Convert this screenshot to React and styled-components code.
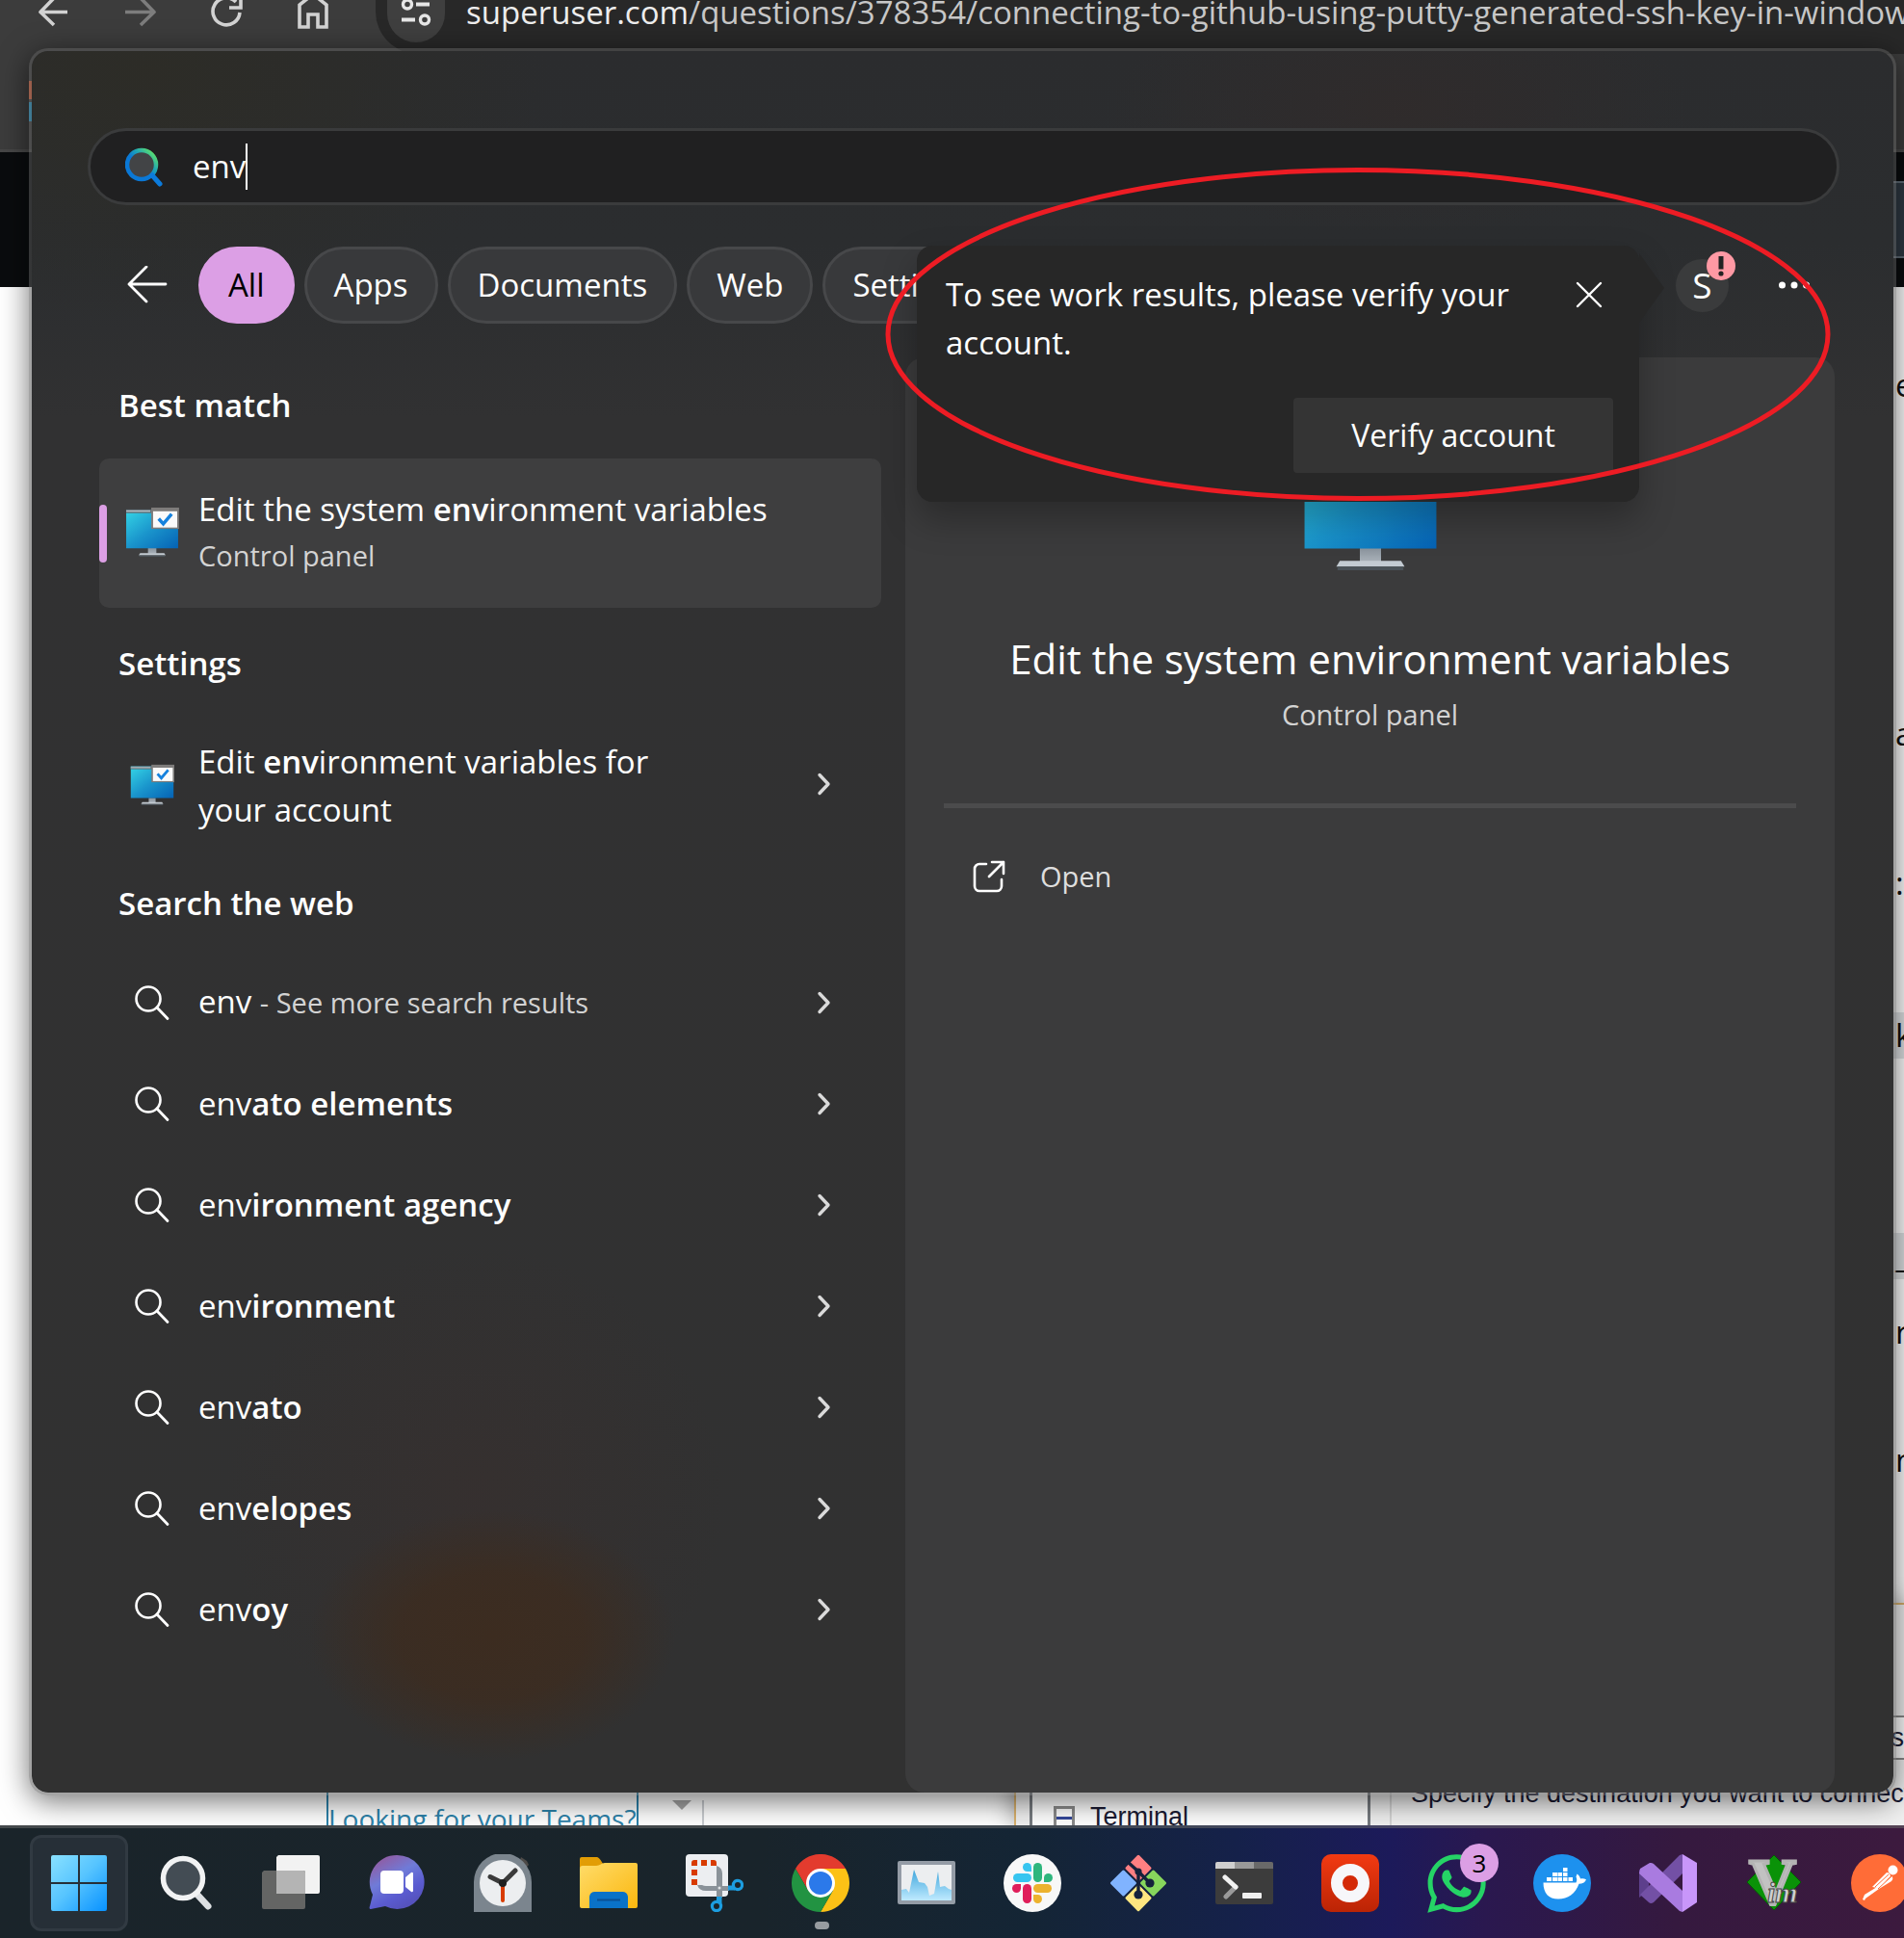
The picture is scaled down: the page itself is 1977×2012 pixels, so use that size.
import React from "react";
import styled, { createGlobalStyle } from "styled-components";
import { FaWhatsapp } from "react-icons/fa";

const GlobalStyle = createGlobalStyle`
  *, *::before, *::after { box-sizing: border-box; }
  body {
    margin: 0;
    background: #fff;
    font-family: "Open Sans", "Noto Sans", sans-serif;
    color: #fff;
  }
  button, input { font: inherit; color: inherit; border: 0; background: none; padding: 0; margin: 0; outline: 0; }
  h1, h2, p { margin: 0; padding: 0; font-weight: 400; }
  svg { display: block; flex: none; }
`;

const Screen = styled.div`
  display: flex;
  flex-direction: column;
  min-height: 100vh;
  overflow: hidden;
`;

const Desktop = styled.main`
  position: relative;
  flex: 1;
  display: flex;
  overflow: hidden;
`;

/* ---------- browser window behind the search panel ---------- */

const Browser = styled.section`
  position: absolute;
  inset: 0;
  display: flex;
  flex-direction: column;
  background: #fff;
  overflow: hidden;
`;

const BrowserToolbar = styled.div`
  flex: none;
  height: 158px;
  display: flex;
  align-items: flex-start;
  background: #3c3c3c;
  border-bottom: 3px solid #474747;
`;

const NavButtons = styled.div`
  flex: none;
  display: flex;
  width: 390px;
  padding-left: 36px;
  gap: 50px;
`;

const NavButton = styled.button`
  width: 40px;
  height: 34px;
  overflow: hidden;
  color: ${(p) => (p.$dim ? "#7d7d7d" : "#d2d2d2")};
`;

const AddressBar = styled.div`
  flex: 1;
  min-width: 0;
  height: 56px;
  padding: 0 0 12px 12px;
  display: flex;
  align-items: flex-end;
  gap: 20px;
  background: #282828;
  border-radius: 0 0 0 44px;
  overflow: hidden;
`;

const SiteInfo = styled.button`
  flex: none;
  width: 60px;
  height: 44px;
  display: flex;
  justify-content: center;
  background: #3f3f3f;
  border-radius: 0 0 30px 30px;
`;

const Url = styled.span`
  padding-left: 2px;
  font-size: 33px;
  line-height: 46px;
  height: 54px;
  white-space: nowrap;
  color: #c7c7c7;
  b { font-weight: 400; color: #ededed; }
`;

const SiteHeader = styled.div`
  flex: none;
  height: 140px;
  padding: 30px 0;
  display: flex;
  justify-content: flex-end;
  background: #0a0c0e;
`;

const SiteSearch = styled.div`
  width: 60px;
  border: 2px solid #5f6b76;
  border-right: 0;
  background: #2e3842;
`;

const Favicon = styled.div`
  position: absolute;
  left: 30px;
  top: 84px;
  width: 40px;
  height: 42px;
  background: linear-gradient(#e8643a 0 19px, transparent 19px 22px, #1fa0d8 22px);
`;

const EdgeText = styled.span`
  position: absolute;
  left: 1966px;
  top: ${(p) => p.$top}px;
  width: 40px;
  padding-left: 2px;
  font-size: 33px;
  line-height: 48px;
  color: #111;
  background: ${(p) => (p.$marked ? "#e0e3e5" : "transparent")};
`;

const TeamsLink = styled.a`
  position: absolute;
  left: 339px;
  bottom: -25px;
  height: 69px;
  padding-top: 14px;
  border: solid #2d83ab;
  border-width: 0 2px;
  font-size: 28px;
  line-height: 46px;
  white-space: nowrap;
  color: #2d83ab;
  text-decoration: none;
`;

const PageGutter = styled.div`
  position: absolute;
  left: 697px;
  bottom: 0;
  width: 34px;
  height: 26px;
  border-right: 2px solid #c9ccd0;
`;

/* ---------- configuration dialog behind the panel ---------- */

const Dialog = styled.section`
  position: absolute;
  left: 1053px;
  right: 0;
  bottom: 0;
  height: 231px;
  display: flex;
  background: #f0f0f0;
  border: solid #d8b06c;
  border-width: 2px 0 0 2px;
  font-family: "Liberation Sans", Arial, sans-serif;
  font-size: 27px;
  color: #1b1b33;
  box-shadow: 0 0 24px rgba(0, 0, 0, 0.4);
`;

const DialogTree = styled.div`
  flex: none;
  width: 354px;
  margin: 20px 0 0 14px;
  padding-left: 22px;
  display: flex;
  align-items: flex-end;
  gap: 16px;
  border: solid #777b80;
  border-width: 0 3px;
  background: #fff;
  line-height: 32px;
  span { height: 25px; }
`;

const TreeBox = styled.i`
  width: 22px;
  height: 20px;
  border: 3px solid #8b8b8b;
  border-bottom: 0;
  background: linear-gradient(transparent 8px, #34489a 8px 11px, transparent 11px);
`;

const DialogForm = styled.div`
  flex: 1;
  margin-left: 20px;
  padding: 178px 0 0 20px;
  border-left: 2px solid #d4d4d4;
  line-height: 36px;
  white-space: nowrap;
`;

const DialogField = styled.div`
  position: absolute;
  right: 0;
  bottom: 68px;
  width: 200px;
  border: solid #8a8a8a;
  border-width: 2px 0;
  background: #fff;
  text-align: right;
  line-height: 42px;
`;

/* ---------- search panel ---------- */

const Panel = styled.section`
  position: relative;
  flex: 1;
  min-width: 0;
  display: flex;
  flex-direction: column;
  margin: 50px 8px 31px 30px;
  padding-top: 80px;
  border: 3px solid rgba(90, 90, 90, 0.55);
  border-radius: 20px;
  background:
    radial-gradient(ellipse 190px 130px at 478px 1645px, #3c2c20 0%, rgba(60, 44, 32, 0.85) 50%, rgba(60, 44, 32, 0) 100%),
    radial-gradient(ellipse 260px 260px at 460px 1500px, rgba(60, 46, 44, 0.4), transparent),
    radial-gradient(ellipse 420px 260px at 120px 20px, rgba(45, 44, 38, 0.9), transparent),
    radial-gradient(ellipse 300px 130px at 1420px 60px, rgba(48, 43, 43, 0.9), transparent),
    linear-gradient(#2b2c2e 0, #2b2d2f 200px, #313132 380px, #313131 100%);
  background-clip: padding-box;
  box-shadow: 0 6px 30px rgba(0, 0, 0, 0.55);
`;

const SearchBox = styled.label`
  display: flex;
  align-items: center;
  height: 80px;
  margin: 0 56px 0 58px;
  padding-left: 36px;
  border: 3px solid #3a3b3c;
  border-radius: 40px;
  background: #202021;
`;

const SearchInput = styled.input`
  margin-left: 30px;
  field-sizing: content;
  font-size: 33px;
  line-height: 46px;
`;

const Caret = styled.span`
  width: 2px;
  height: 48px;
  background: #fff;
`;

const FilterBar = styled.nav`
  display: flex;
  align-items: center;
  gap: 10px;
  margin: 43px 0 35px;
  padding: 0 87px 0 98px;
`;

const BackButton = styled.button`
  width: 65px;
  height: 80px;
  display: flex;
  align-items: center;
`;

const Chip = styled.button`
  height: 80px;
  padding: 0 28px;
  border: 3px solid ${(p) => (p.$active ? "#dc9fe5" : "#47484a")};
  border-radius: 40px;
  background: ${(p) => (p.$active ? "#dc9fe5" : "#38393b")};
  color: ${(p) => (p.$active ? "#000" : "#fff")};
  font-size: 33px;
  line-height: 46px;
`;

const AccountArea = styled.div`
  position: relative;
  margin-left: auto;
`;

const Avatar = styled.button`
  display: grid;
  place-items: center;
  width: 55px;
  height: 55px;
  border-radius: 50%;
  background: #3a3b3c;
  font-size: 37px;
  line-height: 46px;
`;

const AlertBadge = styled.span`
  position: absolute;
  top: -8px;
  right: -7px;
  display: grid;
  place-items: center;
  width: 30px;
  height: 30px;
  border-radius: 50%;
  background: #ff99a4;
`;

const MoreButton = styled.button`
  display: flex;
  align-items: center;
  justify-content: flex-end;
  width: 74px;
  height: 55px;
`;

const Popup = styled.div`
  position: absolute;
  z-index: 2;
  right: calc(100% + 38px);
  top: -14px;
  width: 750px;
  padding: 20px 27px 30px 30px;
  border-radius: 16px;
  background: #272727;
  box-shadow: 0 18px 36px rgba(0, 0, 0, 0.28);
  &::after {
    content: "";
    position: absolute;
    left: 100%;
    top: 8px;
    border: solid transparent;
    border-width: 36px 0 36px 26px;
    border-left-color: #272727;
  }
`;

const PopupMessage = styled.div`
  display: flex;
  align-items: flex-start;
  justify-content: space-between;
  padding: 6px 8px 0 0;
  p { width: 600px; font-size: 33px; line-height: 50px; }
`;

const CloseButton = styled.button`
  display: grid;
  place-items: center;
  width: 34px;
  height: 50px;
`;

const VerifyButton = styled.button`
  display: block;
  width: 332px;
  height: 78px;
  margin: 32px 0 0 auto;
  border-radius: 4px;
  background: #343434;
  font-size: 32px;
  line-height: 46px;
`;

const Results = styled.div`
  flex: 1;
  display: grid;
  grid-template-columns: minmax(0, 812fr) minmax(0, 965fr);
  gap: 25px;
  padding: 0 61px 0 70px;
`;

const ResultList = styled.div`
  padding: 27px 0 136px;
`;

const GroupTitle = styled.h2`
  margin-top: ${(p) => p.$space || 0}px;
  padding-left: 20px;
  font-size: 33px;
  line-height: 46px;
  font-weight: 600;
`;

const BestMatch = styled.button`
  position: relative;
  display: flex;
  width: 100%;
  margin-top: 32px;
  padding: 28px 0 31px;
  border-radius: 10px;
  background: #3e3e3f;
  text-align: left;
  &::before {
    content: "";
    position: absolute;
    left: 0;
    top: 48px;
    width: 8px;
    height: 60px;
    border-radius: 4px;
    background: #dc9fe5;
  }
`;

const IconSlot = styled.span`
  flex: none;
  display: flex;
  align-items: center;
  justify-content: center;
  width: 56px;
  margin: 0 20px 0 27px;
`;

const ResultText = styled.span`
  flex: 1;
  font-size: 33px;
  line-height: 50px;
  b { font-weight: 600; }
  small { font-size: 29px; color: #d3d3d3; }
`;

const Subtitle = styled.span`
  display: block;
  font-size: 29px;
  line-height: 46px;
  color: #d3d3d3;
`;

const ResultRow = styled.button`
  display: flex;
  align-items: center;
  width: 100%;
  height: ${(p) => (p.$tall ? 154 : 105)}px;
  padding-right: 52px;
  text-align: left;
`;

const SettingText = styled(ResultText)`
  max-width: 500px;
  margin-right: auto;
  padding-top: 3px;
`;

const RowGroup = styled.div`
  margin-top: ${(p) => p.$space}px;
`;

const Preview = styled.aside`
  display: flex;
  flex-direction: column;
  align-items: center;
  padding: 89px 40px 0;
  border-radius: 20px;
  background: #3b3b3c;
`;

const PreviewTitle = styled.h1`
  margin-top: 60px;
  font-size: 42px;
  line-height: 64px;
  text-align: center;
`;

const PreviewKind = styled.p`
  margin-top: 3px;
  font-size: 29px;
  line-height: 46px;
  color: #d3d3d3;
`;

const Divider = styled.hr`
  width: 100%;
  height: 5px;
  margin: 69px 0 48px;
  border: 0;
  background: #4b4b4c;
`;

const OpenAction = styled.button`
  display: flex;
  align-items: center;
  gap: 36px;
  width: 100%;
  padding-left: 30px;
  font-size: 29px;
  line-height: 46px;
  color: #dedede;
`;

const RedRing = styled.svg`
  position: absolute;
  z-index: 3;
  right: 63px;
  top: 118px;
  pointer-events: none;
`;

/* ---------- taskbar ---------- */

const Taskbar = styled.footer`
  flex: none;
  display: flex;
  align-items: center;
  height: 117px;
  padding-left: 27px;
  overflow: hidden;
  border-top: 3px solid rgba(110, 110, 110, 0.5);
  background: linear-gradient(90deg, #1a242a 0, #19242b 40%, #142535 54%, #15214a 65%, #1c1a5a 73%, #2a184f 78%, #35193f 88%, #3c1a3e 100%);
`;

const TaskButton = styled.button`
  position: relative;
  flex: none;
  display: grid;
  place-items: center;
  width: 102px;
  height: 100px;
  margin: 0 4px;
  border-radius: 12px;
  border: 3px solid ${(p) => (p.$active ? "#313a42" : "transparent")};
  background: ${(p) => (p.$active ? "#262f37" : "none")};
`;

const RunningMark = styled.span`
  position: absolute;
  bottom: -1px;
  left: 42px;
  width: 15px;
  height: 8px;
  border-radius: 4px;
  background: #979ca0;
`;

const CountBadge = styled.span`
  position: absolute;
  top: 6px;
  left: 52px;
  display: grid;
  place-items: center;
  width: 40px;
  height: 40px;
  border-radius: 50%;
  background: #dc9fe5;
  color: #000;
  font-size: 26px;
  line-height: 40px;
`;

/* ---------- icons ---------- */

const line = (w) => ({ fill: "none", stroke: "currentColor", strokeWidth: w, strokeLinecap: "round", strokeLinejoin: "round" });

const Chevron = () => (
  <svg width="15" height="24" viewBox="0 0 15 24" color="#dadada"><path d="M3 2.500 12 12 3 21.500" {...line(3.4)} /></svg>
);

const Lens = () => (
  <svg width="38" height="38" viewBox="0 0 38 38"><circle cx="15" cy="15" r="12.500" {...line(2.6)} /><path d="m24 24 11 11.500" {...line(2.8)} /></svg>
);

const Monitor = ({ width, id, badge = true }) => (
  <svg width={width} height={Math.round((width * 54) / 58)} viewBox="0 0 58 54">
    <defs>
      <linearGradient id={id} x1="0" y1="0" x2="1" y2="1">
        <stop offset="0" stopColor="#35d6e6" /><stop offset="0.5" stopColor="#1a95cc" /><stop offset="1" stopColor="#0562b5" />
      </linearGradient>
      <linearGradient id={id + "s"} x1="0" y1="0" x2="0" y2="1">
        <stop offset="0" stopColor="#8a939c" /><stop offset="1" stopColor="#a9b1b9" />
      </linearGradient>
    </defs>
    <path d="M24.500 44.500h9v6h-9z" fill={"url(#" + id + "s)"} />
    <path d="M16 50h26l1.500 2.500h-29z" fill="#c3cbd2" />
    <path d="M15 52.500h28V54H15z" fill="#4a5258" />
    <path d="M1 3h56v41.800H1z" fill={"url(#" + id + ")"} />
    {badge && (
      <g>
        <path d="M1 3h28v4H1z" fill="#5f7078" />
        <path d="M1 4h26v1.500H1z" fill="#b7c2c8" />
        <path d="M28 1h30v23H28z" fill="#7e7c7b" />
        <path d="M30 5h26v17.500H30z" fill="#fafafa" />
        <path d="m36 13 5 5.500L50 8" fill="none" stroke="#1682dd" strokeWidth="3.600" />
      </g>
    )}
  </svg>
);

const SearchLogo = () => (
  <svg width="40" height="42" viewBox="0 0 40 42">
    <defs>
      <linearGradient id="lensRing" x1="1" y1="0" x2="0.3" y2="0.7">
        <stop offset="0.1" stopColor="#5fe36b" /><stop offset="0.5" stopColor="#1fa6b5" /><stop offset="0.8" stopColor="#0a78d6" />
      </linearGradient>
    </defs>
    <circle cx="17" cy="19" r="15" fill="#424446" stroke="url(#lensRing)" strokeWidth="4.500" />
    <path d="m28 30 8 9" stroke="#0c7bdc" strokeWidth="5" strokeLinecap="round" />
  </svg>
);

const Box = ({ children }) => <svg width="60" height="60" viewBox="0 0 60 60">{children}</svg>;

const StartIcon = () => (
  <Box>
    <defs><linearGradient id="win" x1="0" y1="0" x2="58" y2="58" gradientUnits="userSpaceOnUse"><stop offset="0" stopColor="#8be2ff" /><stop offset="0.5" stopColor="#56c4ff" /><stop offset="1" stopColor="#0a93ff" /></linearGradient></defs>
    <path fill="url(#win)" d="M3 1h26v28H1V3a2 2 0 0 1 2-2zM31 1h26a2 2 0 0 1 2 2v26H31zM1 31h28v28H3a2 2 0 0 1-2-2zM31 31h28v26a2 2 0 0 1-2 2H31z" />
  </Box>
);

const TaskSearchIcon = () => (
  <Box>
    <path d="m42 41 12 13" stroke="#dde0e3" strokeWidth="7" strokeLinecap="round" />
    <circle cx="28" cy="25" r="20.500" fill="#434c54" stroke="#f1f2f3" strokeWidth="5.500" />
  </Box>
);

const TaskViewIcon = () => (
  <Box>
    <path d="M17 1h41a2 2 0 0 1 2 2v36a2 2 0 0 1-2 2H15V3z" fill="#f2f2f2" />
    <path d="M2 17h41a2 2 0 0 1 2 2v36a2 2 0 0 1-2 2H2a2 2 0 0 1-2-2V19z" fill="#646564" />
    <path d="M15 17h28a2 2 0 0 1 2 2v22H15z" fill="#b4b4b4" />
  </Box>
);

const ChatIcon = () => (
  <Box>
    <defs><linearGradient id="chat" x1="0.2" y1="0.1" x2="0.7" y2="1"><stop offset="0" stopColor="#8d5fa8" /><stop offset="0.35" stopColor="#6f7bd8" /><stop offset="0.7" stopColor="#5a5bd0" /><stop offset="1" stopColor="#5450b8" /></linearGradient></defs>
    <path d="M30 1a28 28 0 1 1-12 53L3 57c-1 0-2-1-1-3l3-12A28 28 0 0 1 30 1z" fill="url(#chat)" />
    <rect x="13" y="17" width="24" height="24" rx="4" fill="#fff" />
    <path d="m39 24 6-5a1.500 1.500 0 0 1 2 1v18a1.500 1.500 0 0 1-2 1l-6-5z" fill="#fff" />
  </Box>
);

const ClockIcon = () => (
  <Box>
    <path d="m49 3 6 4 2 4-4 4-6-6z" fill="#4d4a48" />
    <path d="M0 60V29a30 30 0 0 1 60 0v31z" fill="#7b858e" />
    <circle cx="30" cy="30" r="24" fill="#eceef0" />
    <path d="M30 30v18" stroke="#d83b01" strokeWidth="4" strokeLinecap="round" />
    <path d="M17 23.500 30 30 43 17" fill="none" stroke="#3b3b3b" strokeWidth="5" strokeLinecap="round" />
    <circle cx="30" cy="30" r="4" fill="#1f1f1f" />
  </Box>
);

const FolderIcon = () => (
  <Box>
    <defs><linearGradient id="folder" x1="0" y1="0" x2="1" y2="1"><stop offset="0" stopColor="#ffdc6a" /><stop offset="1" stopColor="#fbb70e" /></linearGradient></defs>
    <path d="M0 14V5a2 2 0 0 1 2-2h16c3 0 6 9 9 9z" fill="#e29d05" />
    <path d="M0 15c0-2 1-3 3-3h14c4 0 6-3 9-3h32a2 2 0 0 1 2 2v43a2 2 0 0 1-2 2H2a2 2 0 0 1-2-2z" fill="url(#folder)" />
    <path d="M10 56V44a6 6 0 0 1 6-5h28a6 6 0 0 1 6 5v12z" fill="#0a72c8" />
    <path d="M18 47.500h24" stroke="#0b4f93" strokeWidth="2" />
  </Box>
);

const SnipIcon = () => (
  <Box>
    <rect x="0" y="0" width="44" height="44" rx="4" fill="#eceef1" />
    <path fill="#d83b01" d="M6 9q0-3 3-3h3v6H6zM16 6h6v6h-6zM26 6h3q3 0 3 3v3h-6zM6 16h6v6H6zM6 26h6v6H6z" />
    <path d="M12 32h5q2 1 4 1h24v5H21q-7 0-9-6zM32 12q6 2 6 8v25h-6z" fill="#8a9299" />
    <path d="M44 32.500h7v5h-7zM32 44h5.500v7H32z" fill="#1c9de0" />
    <circle cx="54" cy="32" r="4.600" fill="none" stroke="#1c9de0" strokeWidth="3.200" />
    <circle cx="32" cy="54" r="4.600" fill="none" stroke="#1c9de0" strokeWidth="3.200" />
    <circle cx="35" cy="35" r="1.500" fill="#dfe3e6" />
  </Box>
);

const ChromeIcon = () => (
  <Box>
    <path d="M4 15a30 30 0 0 1 52 0H30L17 37.500z" fill="#e33b2e" />
    <path d="M56 15a30 30 0 0 1-26 45l13-22.500L30 15z" fill="#fcc116" />
    <path d="M30 60A30 30 0 0 1 4 15l13 22.500h26z" fill="#229342" />
    <circle cx="30" cy="30" r="15" fill="#fff" />
    <circle cx="30" cy="30" r="12" fill="#2b79ea" />
  </Box>
);

const MonitorGraphIcon = () => (
  <Box>
    <defs><linearGradient id="graph" x1="0" y1="0" x2="0" y2="1"><stop offset="0" stopColor="#3fa6dc" /><stop offset="1" stopColor="#bfeaff" /></linearGradient></defs>
    <rect x="0" y="7" width="60" height="45" rx="2" fill="#949ca6" />
    <path d="M4 11h52v37H4z" fill="#eceef0" />
    <path d="M4 37l5-1 3 4 5-24 5 13 6 1 3 4 2 9 5-2 4-23 2 16 5-1 4 3 3 1v11H4z" fill="url(#graph)" />
  </Box>
);

const SlackIcon = () => (
  <Box>
    <circle cx="30" cy="30" r="30" fill="#f8f8f8" />
    <g fill="#36c5f0"><rect x="10" y="20" width="19" height="9" rx="4.500" /><path d="M29 18h-4.500A4.500 4.500 0 1 1 29 13.500z" /></g>
    <g fill="#2eb67d"><rect x="31" y="9" width="9" height="20" rx="4.500" /><path d="M42 29v-4.500a4.500 4.500 0 1 1 4.500 4.500z" /></g>
    <g fill="#ecb22e"><rect x="31" y="31" width="19" height="9" rx="4.500" /><path d="M31 42h4.500a4.500 4.500 0 1 1-4.500 4.500z" /></g>
    <g fill="#e01e5a"><rect x="20" y="31" width="9" height="20" rx="4.500" /><path d="M18 31v4.500a4.500 4.500 0 1 1-4.500-4.500z" /></g>
  </Box>
);

const GitIcon = () => (
  <Box>
    <g transform="rotate(45 30 30)">
      <rect x="9" y="9" width="20" height="20" rx="1.500" fill="#ff7f82" />
      <rect x="31" y="9" width="20" height="20" rx="1.500" fill="#87d65c" />
      <rect x="9" y="31" width="20" height="20" rx="1.500" fill="#80b3ff" />
      <rect x="31" y="31" width="20" height="20" rx="1.500" fill="#ffe680" />
    </g>
    <g stroke="#15213b" strokeWidth="3.400" fill="none" strokeLinecap="round"><path d="m20 9 10 9v24M30 18l12 12" /></g>
    <g fill="#15213b"><circle cx="30" cy="18" r="3.600" /><circle cx="42" cy="30" r="4.600" /><circle cx="30" cy="42" r="4.600" /></g>
  </Box>
);

const TerminalIcon = () => (
  <Box>
    <path d="M2 8h56a2 2 0 0 1 2 2v40a2 2 0 0 1-2 2H2a2 2 0 0 1-2-2V10a2 2 0 0 1 2-2z" fill="#3c3c3c" />
    <path d="M0 15V10a2 2 0 0 1 2-2h18v7z" fill="#cfcfcf" /><path d="M20 8h20v7H20z" fill="#999" /><path d="M40 8h18a2 2 0 0 1 2 2v5H40z" fill="#696969" />
    <path d="m11 44 10-10" stroke="#9a9a9a" strokeWidth="5" strokeLinecap="round" />
    <path d="m10 24 11 10" stroke="#f2f2f2" strokeWidth="5" strokeLinecap="round" />
    <rect x="28" y="40" width="20" height="6" rx="1" fill="#efefef" />
  </Box>
);

const RecorderIcon = () => (
  <Box>
    <defs><linearGradient id="rec" x1="0" y1="0" x2="0" y2="1"><stop offset="0" stopColor="#f23a12" /><stop offset="1" stopColor="#bb2405" /></linearGradient></defs>
    <rect width="60" height="60" rx="10" fill="url(#rec)" />
    <circle cx="30" cy="30" r="14" fill="#d42a08" stroke="#f7f7fa" strokeWidth="12" />
  </Box>
);

const DockerIcon = () => (
  <Box>
    <circle cx="30" cy="30" r="30" fill="#1d91ee" />
    <path fill="#fff" d="M10.500 29.500h34c1-2 1-4 0-6l1-3c2 1 3 3 3.500 5 2-.5 4-.3 6 .8-1 3-4 4.500-7.500 4.500C44 41 36 46.500 26 46.500c-10 0-15.500-6-15.500-17z" />
    <path fill="#fff" d="M14 24h5v4h-5zM20 24h5v4h-5zM25.500 24h4.500v4h-4.500zM31 24h4.500v4H31zM36.500 24h4.500v4h-4.500zM20 19h5v4h-5zM25.500 19h4.500v4h-4.500zM31 19h4.500v4H31zM31 14h4.500v4H31z" />
  </Box>
);

const StudioIcon = () => (
  <Box>
    <path d="M0 16l10 5v17L0 45z" fill="#5d3f8c" />
    <path d="M1 42 42 1l3-1v20L15 50q-3 2-5 0z" fill="#7350a5" />
    <path d="M1 15l10-6q2-.5 4 1l30 28v22l-3-1L0 20z" fill="#a97be0" />
    <path d="M45 0 60 9v41L45 60z" fill="#c896fa" />
  </Box>
);

const VimIcon = () => (
  <Box>
    <path d="M30 1 58 29 30 58 2 29z" fill="#0a9208" stroke="#035a03" strokeWidth="1" />
    <text x="4" y="51" fontFamily="Liberation Serif, serif" fontWeight="700" fontSize="68" fill="#c2c2c2" stroke="#b4b4b4" strokeWidth="3">V</text>
    <text x="23" y="50" fontFamily="Liberation Serif, serif" fontWeight="700" fontStyle="italic" fontSize="30" fill="#d0d0d0" stroke="#444" strokeWidth="1">im</text>
  </Box>
);

const PostmanIcon = () => (
  <Box>
    <circle cx="30" cy="30" r="30" fill="#ff6c37" />
    <g fill="#fff"><circle cx="43.500" cy="16.500" r="5" /><path d="M37 19q3 0 4 4L28 35l-6-1z" /><path d="M43 23q1 3-1 5L29 36 15 46l-1 2-2-1 2-5 13-8z" /></g>
    <path d="m25 34 14-13M28 36l13-12" stroke="#ff6c37" strokeWidth="1" />
  </Box>
);

const tasks = [
  ["Start", StartIcon], ["Search", TaskSearchIcon], ["Task view", TaskViewIcon], ["Chat", ChatIcon],
  ["Clock", ClockIcon], ["File Explorer", FolderIcon], ["Snipping Tool", SnipIcon], ["Chrome", ChromeIcon],
  ["Resource Monitor", MonitorGraphIcon], ["Slack", SlackIcon], ["Git", GitIcon], ["Terminal", TerminalIcon],
  ["Recorder", RecorderIcon], ["WhatsApp", () => <FaWhatsapp size={69} color="#25d366" />], ["Docker", DockerIcon],
  ["Visual Studio", StudioIcon], ["Vim", VimIcon], ["Postman", PostmanIcon],
];

const suggestions = ["ato elements", "ironment agency", "ironment", "ato", "elopes", "oy"];
const filters = ["All", "Apps", "Documents", "Web", "Settings"];

function BrowserWindow() {
  return (
    <Browser aria-label="Browser">
      <BrowserToolbar>
        <NavButtons>
          <NavButton aria-label="Back"><svg width="40" height="34" viewBox="0 0 40 34"><path d="M34 12.500H7M20-2 6 12.500 20 26" {...line(3.6)} strokeLinecap="butt" /></svg></NavButton>
          <NavButton $dim aria-label="Forward"><svg width="40" height="34" viewBox="0 0 40 34"><path d="M4 12.500h28M20-2l14 14.500L20 26" {...line(3.6)} strokeLinecap="butt" /></svg></NavButton>
          <NavButton aria-label="Reload"><svg width="40" height="34" viewBox="0 0 40 34"><path d="M33 13A14 14 0 1 1 29 2M34-6V8H22" {...line(3.6)} strokeLinecap="butt" strokeLinejoin="miter" /></svg></NavButton>
          <NavButton aria-label="Home"><svg width="40" height="34" viewBox="0 0 40 34"><path d="M19-6 5 5v23h9V15h10v13h9V5z" {...line(3.6)} strokeLinejoin="miter" /></svg></NavButton>
        </NavButtons>
        <AddressBar>
          <SiteInfo aria-label="Site information">
            <svg width="34" height="30" viewBox="0 0 34 30" color="#e6e6e6"><path d="M17 4.500h14M2 20.500h14" {...line(4)} strokeLinecap="butt" /><circle cx="8" cy="4.500" r="4.500" {...line(3.4)} /><circle cx="26" cy="20.500" r="4.500" {...line(3.4)} /></svg>
          </SiteInfo>
          <Url><b>superuser.com</b>/questions/378354/connecting-to-github-using-putty-generated-ssh-key-in-windows</Url>
        </AddressBar>
      </BrowserToolbar>
      <SiteHeader><SiteSearch /></SiteHeader>
      <Favicon />
      <EdgeText $top={376}>e</EdgeText>
      <EdgeText $top={738}>a</EdgeText>
      <EdgeText $top={893}>:</EdgeText>
      <EdgeText $top={1051} $marked>k</EdgeText>
      <EdgeText $top={1280} $marked>_</EdgeText>
      <EdgeText $top={1359}>r</EdgeText>
      <EdgeText $top={1492}>n</EdgeText>
      <TeamsLink href="#teams">Looking for your Teams?</TeamsLink>
      <PageGutter><svg width="24" height="12" viewBox="0 0 24 12"><path d="M1 0h20L11 10z" fill="#a5a5a5" /></svg></PageGutter>
    </Browser>
  );
}

export default function App() {
  return (
    <Screen>
      <GlobalStyle />
      <Desktop>
        <BrowserWindow />
        <Dialog aria-label="Session options">
          <DialogTree><TreeBox /><span>Terminal</span></DialogTree>
          <DialogForm>Specify the destination you want to connect to</DialogForm>
          <DialogField>ss</DialogField>
        </Dialog>
        <Panel aria-label="Search">
          <SearchBox>
            <SearchLogo />
            <SearchInput type="text" aria-label="Search" defaultValue="env" />
            <Caret />
          </SearchBox>
          <FilterBar>
            <BackButton aria-label="Back"><svg width="44" height="40" viewBox="0 0 44 40"><path d="M41 19H4M21 1 3 19l18 18" {...line(2.8)} /></svg></BackButton>
            {filters.map((name, i) => <Chip key={name} $active={i === 0}>{name}</Chip>)}
            <AccountArea>
              <Avatar>S</Avatar>
              <AlertBadge><svg width="8" height="22" viewBox="0 0 8 22"><path d="M1.500 1h5v13.500h-5z" fill="#222" /><circle cx="4" cy="19" r="2.600" fill="#222" /></svg></AlertBadge>
              <Popup role="dialog" aria-label="Verify account">
                <PopupMessage>
                  <p>To see work results, please verify your account.</p>
                  <CloseButton aria-label="Close"><svg width="28" height="28" viewBox="0 0 28 28"><path d="m2 2 24 24M26 2 2 26" {...line(2.4)} /></svg></CloseButton>
                </PopupMessage>
                <VerifyButton>Verify account</VerifyButton>
              </Popup>
            </AccountArea>
            <MoreButton aria-label="More"><svg width="32" height="8" viewBox="0 0 32 8" fill="#fff"><circle cx="3.500" cy="4" r="3.500" /><circle cx="16" cy="4" r="3.500" /><circle cx="28.500" cy="4" r="3.500" /></svg></MoreButton>
          </FilterBar>
          <Results>
            <ResultList>
              <GroupTitle>Best match</GroupTitle>
              <BestMatch>
                <IconSlot><Monitor width={56} id="mon1" /></IconSlot>
                <ResultText>Edit the system <b>env</b>ironment variables<Subtitle>Control panel</Subtitle></ResultText>
              </BestMatch>
              <GroupTitle $space={35}>Settings</GroupTitle>
              <RowGroup $space={25}>
                <ResultRow $tall>
                  <IconSlot><Monitor width={46} id="mon2" /></IconSlot>
                  <SettingText>Edit <b>env</b>ironment variables for your account</SettingText>
                  <Chevron />
                </ResultRow>
              </RowGroup>
              <GroupTitle $space={24}>Search the web</GroupTitle>
              <RowGroup $space={27}>
                <ResultRow>
                  <IconSlot><Lens /></IconSlot>
                  <ResultText>env <small>- See more search results</small></ResultText>
                  <Chevron />
                </ResultRow>
                {suggestions.map((rest) => (
                  <ResultRow key={rest}>
                    <IconSlot><Lens /></IconSlot>
                    <ResultText>env<b>{rest}</b></ResultText>
                    <Chevron />
                  </ResultRow>
                ))}
              </RowGroup>
            </ResultList>
            <Preview>
              <Monitor width={142} id="mon3" badge={false} />
              <PreviewTitle>Edit the system environment variables</PreviewTitle>
              <PreviewKind>Control panel</PreviewKind>
              <Divider />
              <OpenAction>
                <svg width="34" height="34" viewBox="0 0 34 34" color="#fff"><path d="M14 4H7a5 5 0 0 0-5 5v18a5 5 0 0 0 5 5h18a5 5 0 0 0 5-5v-7M20 2h12v12M32 2 17 17" {...line(2.6)} /></svg>
                Open
              </OpenAction>
            </Preview>
          </Results>
          <RedRing width="986" height="352" viewBox="0 0 986 352"><ellipse cx="493" cy="176" rx="488" ry="170.500" fill="none" stroke="#ed1c24" strokeWidth="5" /></RedRing>
        </Panel>
      </Desktop>
      <Taskbar>
        {tasks.map(([name, Icon], i) => (
          <TaskButton key={name} aria-label={name} $active={i === 0}>
            <Icon />
            {name === "Chrome" && <RunningMark />}
            {name === "WhatsApp" && <CountBadge>3</CountBadge>}
          </TaskButton>
        ))}
      </Taskbar>
    </Screen>
  );
}
